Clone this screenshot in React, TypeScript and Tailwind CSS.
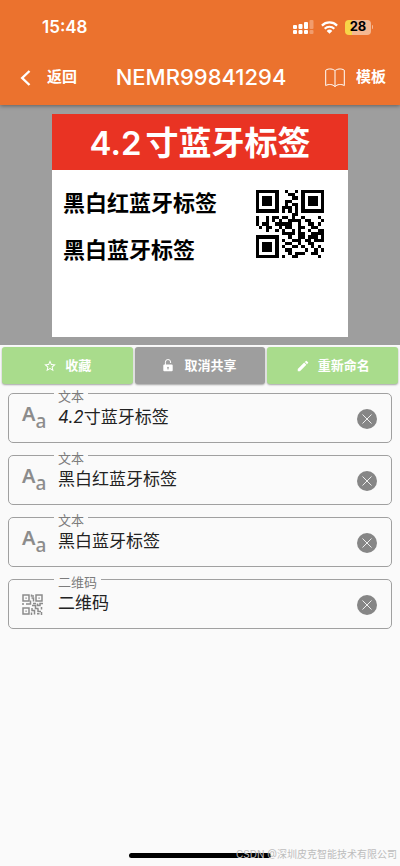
import React from "react";
import { MdEdit, MdStarBorder } from "react-icons/md";

const QR = [
  "111111100100101111111",
  "100000100011001000001",
  "101110100001101011101",
  "101110100110001011101",
  "101110100101101011101",
  "100000101110101000001",
  "111111101010101111111",
  "000000000001100000000",
  "100101101101001000010",
  "100101010011110110001",
  "101100111110010011010",
  "010110010110011001100",
  "000100101001010010011",
  "000000001111011001111",
  "111111100010011011101",
  "100000101001110110111",
  "101110100110010011000",
  "101110101001101001010",
  "101110100110000100101",
  "100000100010111001100",
  "111111101001100000010",
];

function QrCode({ className, label }: { className: string; label: string }) {
  const d = QR.map((row, y) =>
    row
      .split("")
      .map((c, x) => (c === "1" ? `M${x} ${y}h1v1h-1z` : ""))
      .join("")
  ).join("");
  return (
    <svg viewBox="0 0 21 21" className={className} fill="currentColor" shapeRendering="crispEdges" role="img" aria-label={label}>
      <path d={d} />
    </svg>
  );
}

function QrIcon() {
  return (
    <svg width="21" height="21" viewBox="0 0 21 21" fill="none" stroke="currentColor" strokeWidth="1.5" aria-hidden="true">
      <path d="M1 1h6v6H1zM14 1h6v6h-6zM1 14h6v6H1z" />
      <path d="M3.400 3.400h1.400v1.400H3.400zM16.400 3.400h1.400v1.400h-1.400zM3.400 16.400h1.400v1.400H3.400z" fill="currentColor" stroke="none" />
      <path d="M9.500 .5v1.500h2.500M9.500 4h2v3.500M0 10h2M4 10h4.500V6.500M11 9.500h3M15.500 9.500v2h2.500v-2h3M10 11.500h3.500v3h3M10 14v2.500h2.500v4M9.500 18.500v2.500M16 14.500v3h3M19.500 13v2.500M15 19.800h2.500M19.500 18v3" />
    </svg>
  );
}

function SignalIcon() {
  return (
    <svg width="21" height="14" viewBox="0 0 21 14" fill="#fff" aria-hidden="true">
      <rect x="0" y="5" width="4" height="4" rx="1" />
      <rect x="5.500" y="4" width="4" height="5" rx="1" />
      <rect x="11" y="2" width="4" height="7" rx="1" />
      <rect x="16.500" y="0" width="4" height="9" rx="1" opacity=".3" />
      <rect x="0" y="10" width="4" height="4" rx="1" />
      <rect x="5.500" y="10" width="4" height="4" rx="1" />
      <rect x="11" y="10" width="4" height="4" rx="1" />
      <rect x="16.500" y="10" width="4" height="4" rx="1" opacity=".3" />
    </svg>
  );
}

function WifiIcon() {
  return (
    <svg width="17" height="13" viewBox="0 0 17 13" fill="none" stroke="#fff" strokeWidth="2.2" aria-hidden="true">
      <path d="M.9 4.6a10.8 10.8 0 0 1 15.2 0" />
      <path d="M3.7 7.7a6.9 6.9 0 0 1 9.6 0" />
      <path d="M8.5 12.8 5.7 9.9a4 4 0 0 1 5.6 0z" fill="#fff" stroke="none" />
    </svg>
  );
}

function BookIcon() {
  return (
    <svg width="20" height="20" viewBox="0 0 20 20" fill="none" stroke="#fff" strokeWidth="1" strokeLinejoin="round" aria-hidden="true">
      <path d="M10 2.8C8.6.9 3.6.1 .7 2.2V17.6C3.6 15.8 8 16.2 10 18.7 12 16.2 16.4 15.8 19.3 17.6V2.2C16.4.1 11.4.9 10 2.8V18.7" />
    </svg>
  );
}

function UnlockIcon() {
  return (
    <svg width="10" height="13" viewBox="0 0 10 13" aria-hidden="true">
      <path d="M2.4 6V3.2a2.6 2.6 0 0 1 5.2-.2v1" fill="none" stroke="#fff" strokeWidth="1" />
      <path d="M1.3 5.6h7.4q1 0 1 1v4.6q0 1-1 1H1.3q-1 0-1-1V6.600q0-1 1-1zM5 7.700a1 1 0 0 0-.5 1.800v1h1v-1A1 1 0 0 0 5 7.700z" fill="#fff" fillRule="evenodd" />
    </svg>
  );
}

function Field({ id, label, value, icon, italic }: { id: string; label: string; value: string; icon: "text" | "qr"; italic?: boolean }) {
  return (
    <fieldset className="min-w-0 rounded-[5px] border border-[#a0a0a0]">
      <legend className="ml-[45px] px-1 text-[13px] leading-[13px] text-[#7c7c7c]">
        <label htmlFor={id} className="block pt-[6px]">{label}</label>
      </legend>
      <div className="flex h-[39px] items-center pr-[14px] pb-[7px] pl-[13px]">
        {icon === "text" ? (
          <span aria-hidden="true" className="flex w-9 items-start pb-1 font-['Noto_Sans'] text-[#8c8c8c]">
            <span className="text-[20px] leading-5 font-semibold">A</span>
            <span className="pt-[7px] text-[19px] leading-5 font-medium">a</span>
          </span>
        ) : (
          <span className="w-9 pb-[2px] text-[#8c8c8c]">
            <QrIcon />
          </span>
        )}
        <input
          id={id}
          defaultValue={value}
          className={
            italic
              ? "h-8 min-w-0 flex-1 bg-transparent pb-2 text-[17px] text-[#222] italic outline-none [font-synthesis:none]"
              : "h-8 min-w-0 flex-1 bg-transparent pb-2 text-[17px] text-[#222] outline-none"
          }
        />
        <button type="button" aria-label="清除" className="flex size-5 items-center justify-center rounded-full bg-[#868686]">
          <svg width="10" height="10" viewBox="0 0 10 10" stroke="#eee" strokeWidth="1" aria-hidden="true">
            <path d="M.5.5l9 9M9.500.5l-9 9" />
          </svg>
        </button>
      </div>
    </fieldset>
  );
}

const fields = [
  { id: "f1", label: "文本", value: "4.2寸蓝牙标签", icon: "text" as const, italic: true },
  { id: "f2", label: "文本", value: "黑白红蓝牙标签", icon: "text" as const },
  { id: "f3", label: "文本", value: "黑白蓝牙标签", icon: "text" as const },
  { id: "f4", label: "二维码", value: "二维码", icon: "qr" as const },
];

export default function App() {
  return (
    <div className="flex min-h-screen flex-col bg-[#fafafa] font-['Inter','Noto_Sans_CJK_SC',sans-serif]">
      <header className="z-10 bg-[#eb722e] text-white shadow-[0_1px_4px_rgba(0,0,0,0.4)]">
        <div className="flex h-[50px] items-center justify-between pt-1 pr-[27px] pl-[42px]">
          <span className="pt-[2px] text-[17px] font-semibold">15:48</span>
          <div className="flex items-center gap-[7px]">
            <SignalIcon />
            <WifiIcon />
            <span className="flex items-center gap-px">
              <span className="flex h-[15px] w-[26px] items-center justify-center rounded-[4px] bg-linear-to-r from-[#f8d548] from-28% to-[#f5b892] to-28% text-[13px] font-bold text-black">28</span>
              <span className="h-1 w-px rounded-r bg-[#f5b892]" />
            </span>
          </div>
        </div>
        <div className="flex h-[55px] items-center justify-between pr-[14px] pl-5">
          <button type="button" className="flex items-center gap-4 text-[15px] font-bold">
            <svg width="11" height="16" viewBox="0 0 11 16" fill="none" stroke="#fff" strokeWidth="2.4" aria-hidden="true">
              <path d="M9.500 1 2.200 8l7.300 7" />
            </svg>
            返回
          </button>
          <h1 className="text-[22px] font-medium">NEMR99841294</h1>
          <button type="button" className="flex items-center gap-[11px] text-[15px] font-bold">
            <BookIcon />
            模板
          </button>
        </div>
      </header>

      <section className="flex justify-center bg-[#9e9e9e] px-[52px] pt-[9px] pb-2">
        <div className="h-[223px] w-full max-w-[296px] bg-white text-black">
          <h2 className="flex h-14 items-center justify-center gap-1 bg-[#e93323] pt-1 text-[33px] font-bold text-white">
            <span className="font-semibold">4.2</span>
            <span>寸蓝牙标签</span>
          </h2>
          <div className="flex justify-between pt-5 pr-6 pl-[11px]">
            <div className="flex flex-col gap-[15px] text-[22px] leading-8 font-bold whitespace-nowrap">
              <p className="-mt-[3px]">黑白红蓝牙标签</p>
              <p>黑白蓝牙标签</p>
            </div>
            <QrCode className="size-[68px]" label="二维码" />
          </div>
        </div>
      </section>

      <div className="grid grid-cols-3 gap-[2px] px-[2px] pt-[2px] text-[13px] font-bold text-white">
        <button type="button" className="flex h-[37px] items-center justify-center gap-2 rounded-[3px] bg-[#a9dc8c] shadow-[0_1px_2px_rgba(0,0,0,0.35)]">
          <MdStarBorder size={14} />
          收藏
        </button>
        <button type="button" className="flex h-[37px] items-center justify-center gap-[11px] rounded-[3px] bg-[#9e9e9e] shadow-[0_1px_2px_rgba(0,0,0,0.35)]">
          <UnlockIcon />
          取消共享
        </button>
        <button type="button" className="flex h-[37px] items-center justify-center gap-2 rounded-[3px] bg-[#a9dc8c] shadow-[0_1px_2px_rgba(0,0,0,0.35)]">
          <MdEdit size={14} />
          重新命名
        </button>
      </div>

      <main className="flex flex-1 flex-col gap-[3px] px-2">
        {fields.map((f) => (
          <Field key={f.id} {...f} />
        ))}
      </main>

      <footer className="relative flex justify-center pb-2">
        <div className="h-[5px] w-[142px] rounded-full bg-black" />
        <p className="absolute right-[3px] bottom-1 text-[10px] leading-4 text-[#bdbdbd]">CSDN @深圳皮克智能技术有限公司</p>
      </footer>
    </div>
  );
}
